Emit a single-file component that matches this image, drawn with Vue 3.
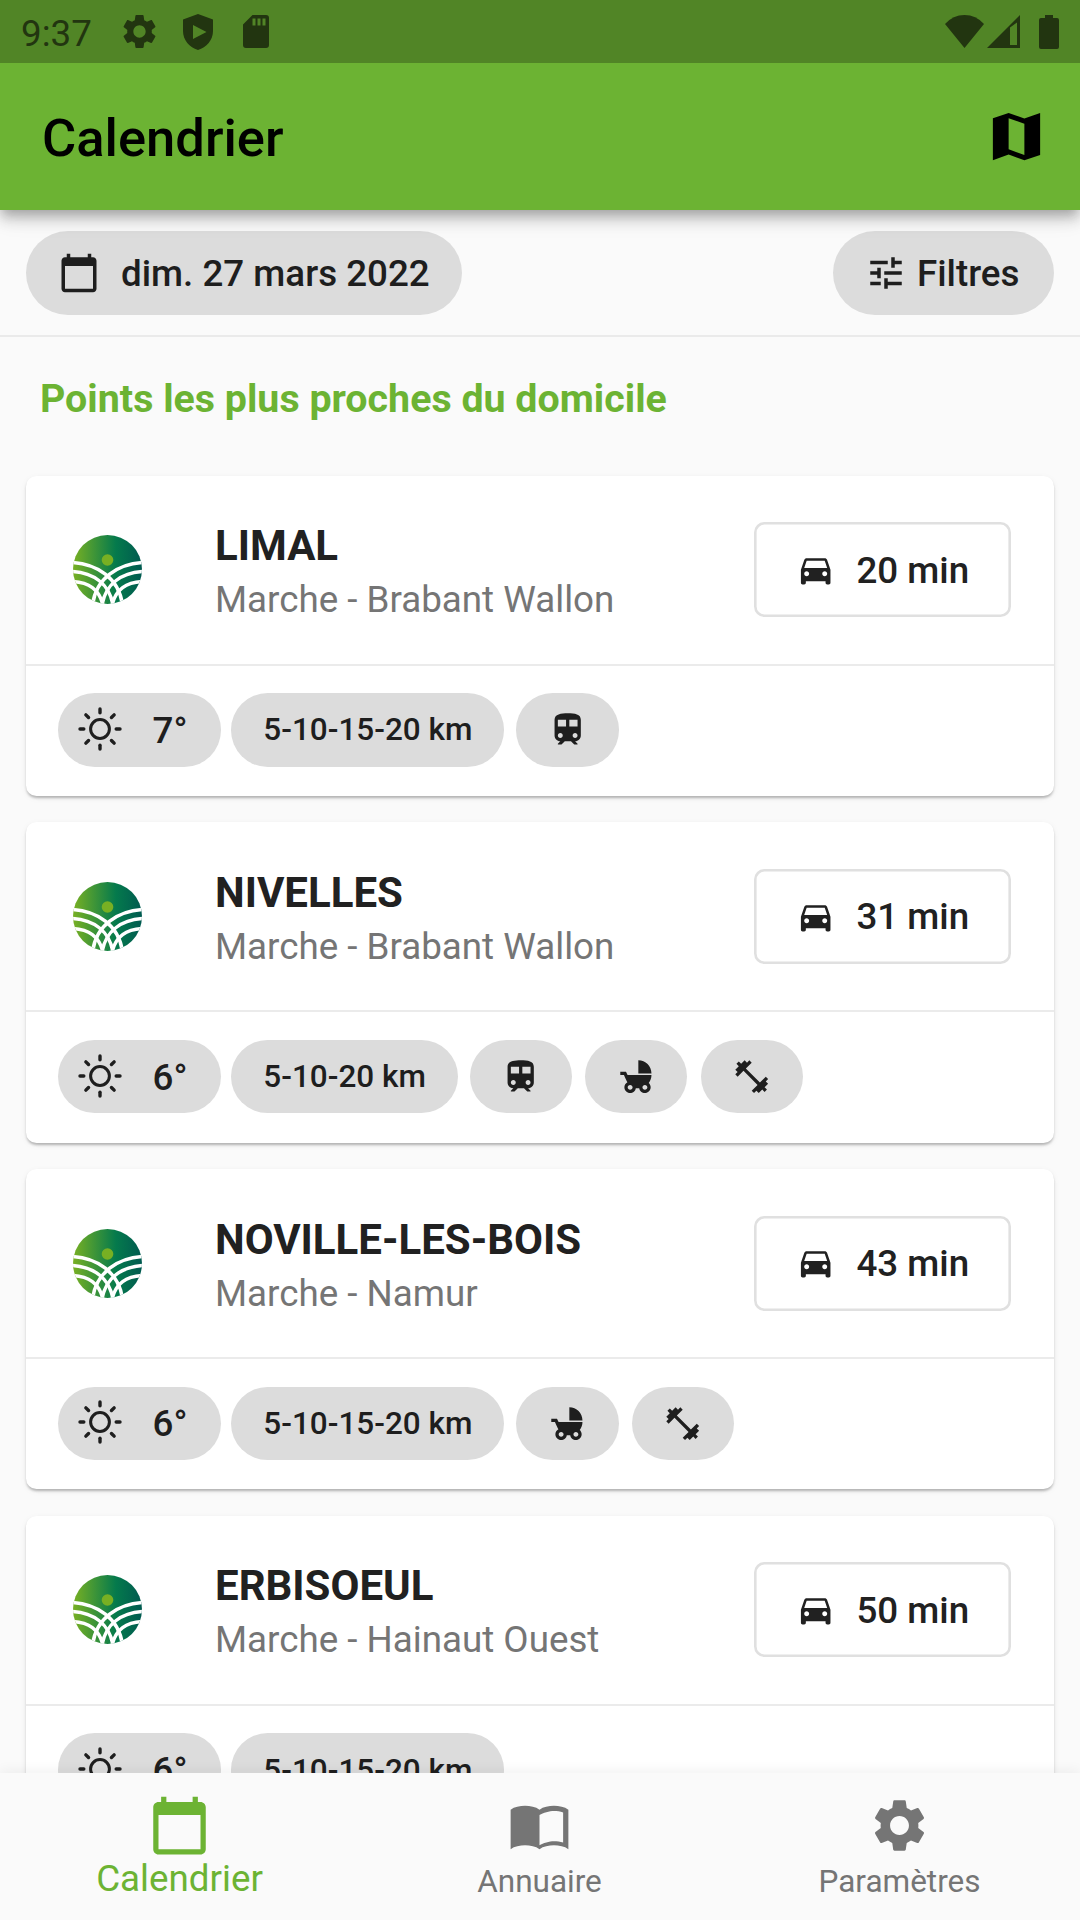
<script setup>
const icons = {
  gear: 'M19.14 12.94c.04-.3.06-.61.06-.94 0-.32-.02-.64-.07-.94l2.03-1.58c.18-.14.23-.41.12-.61l-1.92-3.32c-.12-.22-.37-.29-.59-.22l-2.39.96c-.5-.38-1.03-.7-1.62-.94l-.36-2.54c-.04-.24-.24-.41-.48-.41h-3.84c-.24 0-.43.17-.47.41l-.36 2.54c-.59.24-1.13.57-1.62.94l-2.39-.96c-.22-.08-.47 0-.59.22L2.74 8.87c-.12.21-.08.47.12.61l2.03 1.58c-.05.3-.09.63-.09.94s.02.64.07.94l-2.03 1.58c-.18.14-.23.41-.12.61l1.92 3.32c.12.22.37.29.59.22l2.39-.96c.5.38 1.03.7 1.62.94l.36 2.54c.05.24.24.41.48.41h3.84c.24 0 .44-.17.47-.41l.36-2.54c.59-.24 1.13-.56 1.62-.94l2.39.96c.22.08.47 0 .59-.22l1.92-3.32c.12-.22.07-.47-.12-.61l-2.01-1.58zM12 15.6c-1.98 0-3.6-1.62-3.6-3.6s1.62-3.6 3.6-3.6 3.6 1.62 3.6 3.6-1.62 3.6-3.6 3.6z',
  calendar: 'M20 3h-1V1h-2v2H7V1H5v2H4c-1.1 0-2 .9-2 2v16c0 1.1.9 2 2 2h16c1.1 0 2-.9 2-2V5c0-1.1-.9-2-2-2zm0 18H4V8h16v13z',
  tune: 'M3 17v2h6v-2H3zM3 5v2h10V5H3zm10 16v-2h8v-2h-8v-2h-2v6h2zM7 9v2H3v2h4v2h2V9H7zm14 4v-2H11v2h10zm-6-4h2V7h4V5h-4V3h-2v6z',
  map: 'M3 5L9 3l6 2.1L21 3v16l-6 2-6-2.1L3 21zM9 5v11.9l6 2.1V7.1z',
  car: 'M18.92 6.01C18.72 5.42 18.16 5 17.5 5h-11c-.66 0-1.21.42-1.42 1.01L3 12v8c0 .55.45 1 1 1h1c.55 0 1-.45 1-1v-1h12v1c0 .55.45 1 1 1h1c.55 0 1-.45 1-1v-8l-2.08-5.99zM6.5 16c-.83 0-1.5-.67-1.5-1.5S5.67 13 6.5 13s1.5.67 1.5 1.5S7.33 16 6.5 16zm11 0c-.83 0-1.5-.67-1.5-1.5s.67-1.5 1.5-1.5 1.5.67 1.5 1.5-.67 1.5-1.5 1.5zM5 11l1.5-4.5h11L19 11H5z',
  train: 'M12 2c-4 0-8 .5-8 4v9.5C4 17.43 5.57 19 7.5 19L6 20.5v.5h2.23l2-2H14l2 2h2v-.5L16.5 19c1.93 0 3.5-1.57 3.5-3.5V6c0-3.5-3.58-4-8-4zM7.5 17c-.83 0-1.5-.67-1.5-1.5S6.67 14 7.5 14s1.5.67 1.5 1.5S8.33 17 7.5 17zm3.5-7H6V6h5v4zm2 0V6h5v4h-5zm3.5 7c-.83 0-1.5-.67-1.5-1.5s.67-1.5 1.5-1.5 1.5.67 1.5 1.5-.67 1.5-1.5 1.5z',
  stroller: 'M13 2v8h8c0-4.42-3.58-8-8-8zm6.32 13.89C20.37 14.54 21 12.84 21 11H6.44l-.95-2H2v2h2.22s1.89 4.07 2.12 4.42c-1.1.59-1.84 1.75-1.84 3.08C4.5 20.43 6.07 22 8 22c1.76 0 3.22-1.3 3.46-3h2.08c.24 1.7 1.7 3 3.46 3 1.93 0 3.5-1.57 3.5-3.5 0-1.04-.46-1.97-1.18-2.61zM8 20c-.83 0-1.5-.67-1.5-1.5S7.17 17 8 17s1.5.67 1.5 1.5S8.83 20 8 20zm9 0c-.83 0-1.5-.67-1.5-1.5s.67-1.5 1.5-1.5 1.5.67 1.5 1.5-.67 1.5-1.5 1.5z',
  fitness: 'M20.57 14.86L22 13.43 20.57 12 17 15.57 8.43 7 12 3.43 10.57 2 9.14 3.43 7.71 2 5.57 4.14 4.14 2.71 2.71 4.14l1.43 1.43L2 7.71l1.43 1.43L2 10.57 3.43 12 7 8.43 15.57 17 12 20.57 13.43 22l1.43-1.43L16.29 22l2.14-2.14 1.43 1.43 1.43-1.43-1.43-1.43L22 16.29z',
  book: 'M12 6c-1.45-1.1-3.55-1.5-5.5-1.5S2.45 4.9 1 6v15c1.45-1.1 3.55-1.5 5.5-1.5s4.05.4 5.5 1.5c1.45-1.1 3.55-1.5 5.5-1.5s4.05.4 5.5 1.5V6c-1.45-1.1-3.55-1.5-5.5-1.5S13.45 4.9 12 6zM21 18.5c-1.1-.35-2.3-.5-3.5-.5-1.7 0-4.15.65-5.5 1.5V8c1.35-.85 3.8-1.5 5.5-1.5 1.2 0 2.4.15 3.5.5v11.5z',
}

const points = [
  { city: 'LIMAL', region: 'Marche - Brabant Wallon', time: '20 min', temp: '7°', km: '5-10-15-20 km', tags: ['train'] },
  { city: 'NIVELLES', region: 'Marche - Brabant Wallon', time: '31 min', temp: '6°', km: '5-10-20 km', tags: ['train', 'stroller', 'fitness'] },
  { city: 'NOVILLE-LES-BOIS', region: 'Marche - Namur', time: '43 min', temp: '6°', km: '5-10-15-20 km', tags: ['stroller', 'fitness'] },
  { city: 'ERBISOEUL', region: 'Marche - Hainaut Ouest', time: '50 min', temp: '6°', km: '5-10-15-20 km', tags: [] },
]

const rays = [0, 45, 90, 135, 180, 225, 270, 315]
</script>

<template>
  <div class="screen">
    <header class="top">
      <div class="status">
        <span class="clock">9:37</span>
        <svg class="s-gear" viewBox="0 0 24 24"><path :d="icons.gear" /></svg>
        <svg class="s-shield" viewBox="0 0 30 36"><path fill-rule="evenodd" d="M15 0L30 5.5V17C30 26 23.5 33.5 15 36 6.5 33.500 0 26 0 17V5.500zM10 11v14l13.5-7z" /></svg>
        <svg class="s-sd" viewBox="0 0 26 33"><path fill-rule="evenodd" d="M9.5 0H23a3 3 0 0 1 3 3v27a3 3 0 0 1-3 3H3a3 3 0 0 1-3-3V9.500zM9.5 3.5v7h3v-7zM14.5 3.5v7h3v-7zM19.5 3.5v7h3v-7z" /></svg>
        <span class="grow"></span>
        <svg class="s-wifi" viewBox="0 0 39 33"><path d="M0 9Q8 0 19.5 0T39 9L19.5 33z" /></svg>
        <svg class="s-signal" viewBox="0 0 33 33"><path fill-rule="evenodd" d="M0 33L33 0v33zM23 12.5V30h7V7.5z" /></svg>
        <svg class="s-battery" viewBox="0 0 20 34"><path d="M6 0h8v3h4a2 2 0 0 1 2 2v27a2 2 0 0 1-2 2H2a2 2 0 0 1-2-2V5a2 2 0 0 1 2-2h4z" /></svg>
      </div>
      <div class="appbar">
        <h1>Calendrier</h1>
        <svg class="map" viewBox="0 0 24 24"><path fill-rule="evenodd" :d="icons.map" /></svg>
      </div>
    </header>

    <div class="filters">
      <button class="pill date">
        <svg viewBox="0 0 24 24"><path :d="icons.calendar" /></svg>
        <span>dim. 27 mars 2022</span>
      </button>
      <button class="pill filter">
        <svg viewBox="0 0 24 24"><path :d="icons.tune" /></svg>
        <span>Filtres</span>
      </button>
    </div>

    <main class="list">
      <h2>Points les plus proches du domicile</h2>
      <article v-for="p in points" :key="p.city" class="card">
        <div class="head">
          <svg class="logo" viewBox="0 0 69 69">
            <defs>
              <linearGradient id="field" x1="0" x2="1" y1="0" y2="0">
                <stop offset="0" stop-color="#78b023" />
                <stop offset=".62" stop-color="#057a4c" />
                <stop offset="1" stop-color="#005a50" />
              </linearGradient>
              <clipPath id="disc"><circle cx="34.5" cy="34.5" r="34.5" /></clipPath>
            </defs>
            <g clip-path="url(#disc)">
              <rect width="69" height="69" fill="url(#field)" />
              <g fill="none" stroke="#fff" stroke-width="3.5">
                <path d="M-1 27.5C24 29 46 43 49.500 70" />
                <path d="M-1 36.5C20 38 36 48 40 70" />
                <path d="M-1 46.5C16 47.500 26 54 30 70" />
                <path d="M70 27.5C45 29 23 43 19.500 70" />
                <path d="M70 36.5C49 38 33 48 29 70" />
                <path d="M70 46.5C53 47.500 43 54 39 70" />
              </g>
              <circle cx="34.5" cy="25" r="5.8" fill="#78b023" />
            </g>
          </svg>
          <div class="names">
            <h3>{{ p.city }}</h3>
            <p>{{ p.region }}</p>
          </div>
          <button class="drive">
            <svg viewBox="0 0 24 24"><path :d="icons.car" /></svg>
            <span>{{ p.time }}</span>
          </button>
        </div>
        <div class="tags">
          <div class="chip weather">
            <svg viewBox="-22 -22 44 44">
              <g fill="none" stroke="#1e1e1e" stroke-linecap="round">
                <circle r="9.4" stroke-width="3" />
                <path v-for="a in rays" :key="a" d="M0-16.2V-20" stroke-width="3.4" :transform="`rotate(${a})`" />
              </g>
            </svg>
            <span>{{ p.temp }}</span>
          </div>
          <div class="chip km">{{ p.km }}</div>
          <div v-for="t in p.tags" :key="t" class="chip icon">
            <svg viewBox="0 0 24 24"><path :d="icons[t]" /></svg>
          </div>
        </div>
      </article>
    </main>

    <nav class="nav">
      <a class="tab active">
        <svg viewBox="0 0 24 24"><path :d="icons.calendar" /></svg>
        <span>Calendrier</span>
      </a>
      <a class="tab">
        <svg viewBox="0 0 24 24"><path fill-rule="evenodd" :d="icons.book" /></svg>
        <span>Annuaire</span>
      </a>
      <a class="tab">
        <svg viewBox="0 0 24 24"><path :d="icons.gear" /></svg>
        <span>Paramètres</span>
      </a>
    </nav>
  </div>
</template>

<style>
body { margin: 0; }
</style>

<style scoped>
* { box-sizing: border-box; }
.screen {
  width: 1080px;
  height: 1920px;
  display: flex;
  flex-direction: column;
  overflow: hidden;
  background: #fafafa;
  color: #1e1e1e;
  font-family: Roboto, "Liberation Sans", sans-serif;
}
svg { display: block; flex: none; fill: currentColor; }
h1, h2, h3, p { margin: 0; }
button { border: 0; padding: 0; font: inherit; color: inherit; white-space: nowrap; }

.top {
  flex: none;
  position: relative;
  z-index: 2;
  background: #6cb333;
  box-shadow: 0 5.2px 10.5px -2.6px rgba(0, 0, 0, .2), 0 10.5px 13px 0 rgba(0, 0, 0, .14), 0 2.6px 26px 0 rgba(0, 0, 0, .12);
  clip-path: inset(0 0 -40px 0);
}
.status {
  height: 63px;
  display: flex;
  align-items: center;
  padding: 0 21px;
  background: #518526;
  color: #223510;
}
.clock { width: 70px; margin-right: 28px; font-size: 36.75px; line-height: 63px; padding-top: 4px; }
.s-gear { width: 41px; height: 41px; margin-right: 23px; }
.s-shield { width: 30px; height: 36px; margin-right: 30px; }
.s-sd { width: 26px; height: 33px; }
.grow { flex: 1; }
.s-wifi { width: 39px; height: 33px; margin-right: 3px; }
.s-signal { width: 33px; height: 33px; margin-right: 19px; }
.s-battery { width: 20px; height: 34px; }
.appbar {
  height: 147px;
  display: flex;
  align-items: center;
  justify-content: space-between;
  padding: 0 32px 0 42px;
  color: #000;
}
h1 { padding-top: 2px; font-size: 52.5px; font-weight: 500; line-height: 62px; }
.map { width: 63px; height: 63px; }

.filters {
  flex: none;
  height: 127px;
  display: flex;
  justify-content: space-between;
  padding: 21px 26px 0;
  border-bottom: 2px solid #eaeaea;
}
.pill {
  height: 84px;
  display: flex;
  align-items: center;
  border-radius: 42px;
  background: #dcdcdc;
  font-size: 36.75px;
  font-weight: 500;
}
.pill svg { width: 42px; height: 42px; }
.date { width: 436px; padding-left: 32px; gap: 21px; }
.filter { width: 221px; padding-left: 32px; gap: 10px; }

.list { flex: 1; min-height: 0; overflow: hidden; padding: 0 26px; }
h2 {
  height: 138.5px;
  padding: 39px 0 0 14px;
  font-size: 39.375px;
  font-weight: 700;
  line-height: 46px;
  color: #6cb333;
}
.card {
  height: 320.25px;
  margin-bottom: 26.5px;
  border-radius: 10.5px;
  background: #fff;
  box-shadow: 0 2.6px 2.6px -1px rgba(0, 0, 0, .18), 0 2px 3px 0 rgba(0, 0, 0, .1), 0 2px 7px 0 rgba(0, 0, 0, .05);
}
.head {
  height: 190px;
  display: flex;
  align-items: center;
  padding: 0 43px 0 47px;
  border-bottom: 2px solid #ebebeb;
}
.logo { width: 69px; height: 69px; margin-right: 73px; }
.names { flex: 1; padding-top: 9px; }
h3 { font-size: 42px; font-weight: 700; line-height: 52px; color: #212121; }
.names p { font-size: 36.75px; line-height: 56px; color: #757575; white-space: nowrap; }
.drive {
  width: 257px;
  height: 95px;
  display: flex;
  align-items: center;
  gap: 21px;
  padding-left: 42px;
  border-radius: 10.5px;
  background: #fff;
  box-shadow: inset 0 0 0 2.6px #e0e0e0;
  color: #212121;
  font-size: 36.75px;
  font-weight: 500;
}
.drive svg { width: 39.4px; height: 39.4px; }
.drive span { padding-top: 1px; }
.tags { display: flex; padding: 27.5px 0 0 32px; }
.chip {
  height: 73.5px;
  display: flex;
  align-items: center;
  border-radius: 36.75px;
  background: #dcdcdc;
}
.weather { width: 162.5px; margin-right: 10.8px; padding-left: 19.5px; font-size: 36.75px; font-weight: 500; }
.weather svg { width: 44px; height: 44px; margin: -2px 31px 0 0; }
.weather span { padding-top: 1px; }
.km { padding: 0 32px; margin-right: 11.7px; font-size: 31.5px; font-weight: 500; }
.icon { width: 102.4px; margin-right: 13.1px; justify-content: center; }
.icon svg { width: 39.4px; height: 39.4px; }

.nav {
  flex: none;
  position: relative;
  z-index: 2;
  height: 147px;
  display: flex;
  background: #fafafa;
  box-shadow: 0 -2px 12px rgba(0, 0, 0, .06);
}
.tab {
  flex: 1;
  display: flex;
  flex-direction: column;
  align-items: center;
  padding: 21px 1px 0 0;
  color: #757575;
  font-size: 31.5px;
  line-height: 42px;
}
.tab svg { width: 63px; height: 63px; margin-bottom: 4px; }
.active { color: #6cb333; font-size: 36.75px; }
.active svg { margin-bottom: 1px; }
</style>
